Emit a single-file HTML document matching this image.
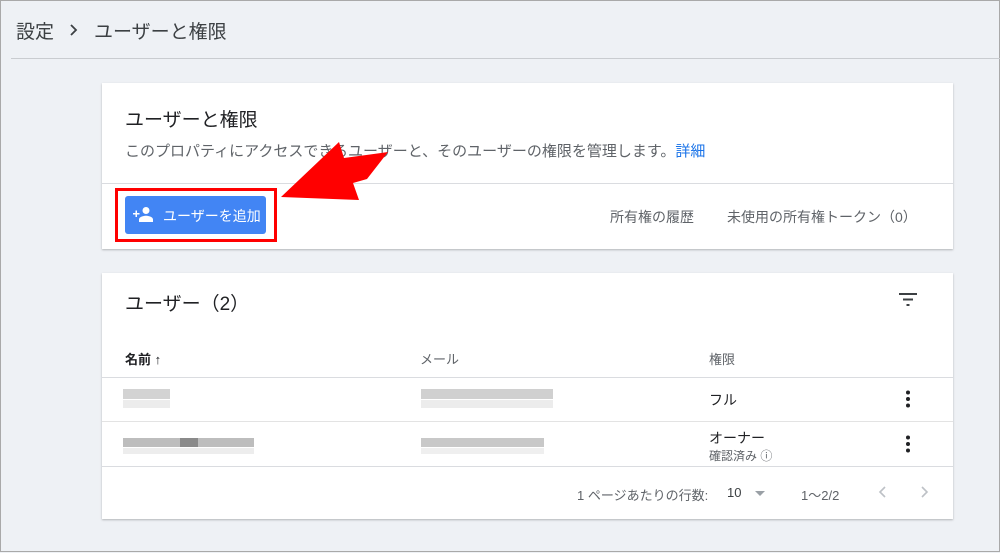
<!DOCTYPE html>
<html><head><meta charset="utf-8"><style>
*{margin:0;padding:0;box-sizing:border-box}
body{width:1000px;height:552px;background:#eef1f5;font-family:"Liberation Sans","Noto Sans CJK JP",sans-serif;position:relative;overflow:hidden;border:1px solid #a9a9a9;color:#202124}
.abs{position:absolute;white-space:nowrap}
.card{position:absolute;left:101px;width:851px;background:#fff;box-shadow:0 1px 2px rgba(0,0,0,.25)}
.g{color:#5f6368}
.px{position:absolute;background:#c8c8c8}
</style></head><body>
<div class="abs" style="left:15px;top:16px;font-size:19px;color:#3c4043">設定</div>
<svg class="abs" style="left:68px;top:22px" width="10" height="14" viewBox="0 0 10 14"><path d="M2 2l5 5-5 5" stroke="#3c4043" stroke-width="1.8" fill="none"/></svg>
<div class="abs" style="left:93px;top:16px;font-size:19px;color:#3c4043">ユーザーと権限</div>
<div class="abs" style="left:10px;top:57px;width:990px;height:1px;background:#c9ccd0"></div>

<div class="card" style="top:82px;height:166px">
  <div class="abs" style="left:23px;top:22px;font-size:19px">ユーザーと権限</div>
  <div class="abs g" style="left:23px;top:57px;font-size:15px">このプロパティにアクセスできるユーザーと、そのユーザーの権限を管理します。<span style="color:#1a73e8">詳細</span></div>
  <div class="abs" style="left:0;top:100px;width:851px;height:1px;background:#dadce0"></div>
  <div class="abs" style="left:13px;top:105px;width:162px;height:54px;border:3px solid #f00"></div>
  <div class="abs" style="left:23px;top:113px;width:141px;height:38px;background:#4285f4;border-radius:3px;color:#fff;font-size:14px">
    <svg style="position:absolute;left:8px;top:10px" width="22" height="18" viewBox="0 0 22 18"><path d="M13 8a3.5 3.5 0 1 0 0-7 3.5 3.5 0 0 0 0 7zm0 1.8c-2.4 0-7 1.2-7 3.6V16h14v-2.6c0-2.4-4.6-3.6-7-3.6zM4 7V4.5H2.5V7H0v1.5h2.5V11H4V8.5h2.5V7z" fill="#fff"/></svg>
    <span class="abs" style="left:38px;top:10px">ユーザーを追加</span></div>
  <div class="abs g" style="left:508px;top:124px;font-size:14px">所有権の履歴</div>
  <div class="abs g" style="left:625px;top:124px;font-size:14px">未使用の所有権トークン（0）</div>
</div>

<div class="card" style="top:272px;height:246px">
  <div class="abs" style="left:23px;top:16px;font-size:19px">ユーザー（2）</div>
  <svg class="abs" style="left:797px;top:20px" width="18" height="14" viewBox="0 0 18 14"><path d="M0 1h18M4 6.5h10M7.5 12h3" stroke="#3c4043" stroke-width="2"/></svg>
  <div class="abs" style="left:23px;top:76px;font-size:13px;font-weight:bold">名前 <span style="font-weight:normal">↑</span></div>
  <div class="abs g" style="left:318px;top:76px;font-size:13px">メール</div>
  <div class="abs g" style="left:607px;top:76px;font-size:13px">権限</div>
  <div class="abs" style="left:0;top:104px;width:851px;height:1px;background:#dadce0"></div>
  <div class="px" style="left:21px;top:116px;width:47px;height:10px;background:#d3d3d3"></div>
  <div class="px" style="left:21px;top:127px;width:47px;height:8px;background:#ececec"></div>
  <div class="px" style="left:319px;top:116px;width:132px;height:10px;background:#d0d0d0"></div>
  <div class="px" style="left:319px;top:127px;width:132px;height:8px;background:#ececec"></div>
  <div class="abs" style="left:607px;top:117px;font-size:14px">フル</div>
  <svg class="abs" style="left:803px;top:117px" width="6" height="18"><circle cx="3" cy="2.5" r="2" fill="#202124"/><circle cx="3" cy="9" r="2" fill="#202124"/><circle cx="3" cy="15.5" r="2" fill="#202124"/></svg>
  <div class="abs" style="left:0;top:148px;width:851px;height:1px;background:#e3e3e3"></div>
  <div class="px" style="left:21px;top:165px;width:131px;height:9px;background:#bdbdbd"></div>
  <div class="px" style="left:78px;top:165px;width:18px;height:9px;background:#8a8a8a"></div>
  <div class="px" style="left:21px;top:175px;width:131px;height:6px;background:#ededed"></div>
  <div class="px" style="left:319px;top:165px;width:123px;height:9px;background:#c8c8c8"></div>
  <div class="px" style="left:319px;top:175px;width:123px;height:6px;background:#efefef"></div>
  <div class="abs" style="left:607px;top:155px;font-size:14px">オーナー</div>
  <div class="abs g" style="left:607px;top:174px;font-size:12px">確認済み ⓘ</div>
  <svg class="abs" style="left:803px;top:162px" width="6" height="18"><circle cx="3" cy="2.5" r="2" fill="#202124"/><circle cx="3" cy="9" r="2" fill="#202124"/><circle cx="3" cy="15.5" r="2" fill="#202124"/></svg>
  <div class="abs" style="left:0;top:193px;width:851px;height:1px;background:#dadce0"></div>
  <div class="abs g" style="left:475px;top:212px;font-size:13px">1 ページあたりの行数:</div>
  <div class="abs" style="left:625px;top:212px;font-size:13px;color:#3c4043">10</div>
  <div class="abs" style="left:653px;top:218px;width:0;height:0;border-left:5px solid transparent;border-right:5px solid transparent;border-top:5px solid #9aa0a6"></div>
  <div class="abs g" style="left:699px;top:212px;font-size:13px">1〜2/2</div>
  <svg class="abs" style="left:776px;top:212px" width="10" height="14" viewBox="0 0 10 14"><path d="M7 2L2 7l5 5" stroke="#bdc1c6" stroke-width="1.6" fill="none"/></svg>
  <svg class="abs" style="left:817px;top:212px" width="10" height="14" viewBox="0 0 10 14"><path d="M3 2l5 5-5 5" stroke="#bdc1c6" stroke-width="1.6" fill="none"/></svg>
</div>

<svg class="abs" style="left:0;top:0" width="1000" height="552"><polygon points="280,196 338,141 343,157 387,151 366,178 352,182 358,199" fill="#f00"/></svg>
</body></html>
